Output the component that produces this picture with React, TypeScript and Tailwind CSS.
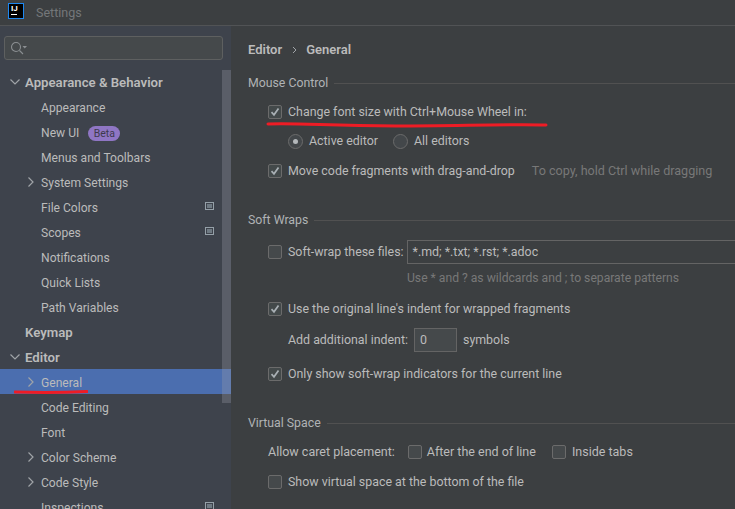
const font = { fontFamily: 'Roboto, "Noto Sans", sans-serif' };

type NavItem = {
  label: string;
  indent: number;
  bold?: boolean;
  chevron?: "right" | "down";
  selected?: boolean;
  badge?: boolean;
  page?: boolean;
};

const navItems: NavItem[] = [
  { label: "Appearance & Behavior", indent: 25, bold: true, chevron: "down" },
  { label: "Appearance", indent: 41 },
  { label: "New UI", indent: 41, badge: true },
  { label: "Menus and Toolbars", indent: 41 },
  { label: "System Settings", indent: 41, chevron: "right" },
  { label: "File Colors", indent: 41, page: true },
  { label: "Scopes", indent: 41, page: true },
  { label: "Notifications", indent: 41 },
  { label: "Quick Lists", indent: 41 },
  { label: "Path Variables", indent: 41 },
  { label: "Keymap", indent: 25, bold: true },
  { label: "Editor", indent: 25, bold: true, chevron: "down" },
  { label: "General", indent: 41, chevron: "right", selected: true },
  { label: "Code Editing", indent: 41 },
  { label: "Font", indent: 41 },
  { label: "Color Scheme", indent: 41, chevron: "right" },
  { label: "Code Style", indent: 41, chevron: "right" },
  { label: "Inspections", indent: 41, page: true },
];

function Chevron({ dir, left }: { dir: "right" | "down"; left: number }) {
  return (
    <svg
      className="absolute top-[7px]"
      style={{ left }}
      width="12"
      height="12"
      viewBox="0 0 12 12"
      fill="none"
      stroke="#a0a4a8"
      strokeWidth="1.2"
    >
      <path d={dir === "down" ? "M1.5 3.5 L6 8 L10.5 3.5" : "M3.5 1.5 L8 6 L3.5 10.5"} />
    </svg>
  );
}

function NavRow({ item }: { item: NavItem }) {
  return (
    <div
      className={`relative flex h-[25px] shrink-0 items-center ${
        item.selected ? "bg-[#4b6eaf]" : ""
      } ${item.bold ? "pt-[2px] text-[13.2px] font-semibold" : "pt-[4px] text-[12.1px]"} text-[#bbbbbb]`}
      style={{ paddingLeft: item.indent }}
    >
      {item.chevron && (
        <Chevron dir={item.chevron} left={item.indent === 25 ? 9 : 25} />
      )}
      <span>{item.label}</span>
      {item.badge && (
        <span className="ml-[9px] flex h-[15px] w-[32px] items-center justify-center rounded-full bg-[#8f76c4] text-[10.5px] text-[#3e3a4c]">
          Beta
        </span>
      )}
      {item.page && (
        <svg className="absolute left-[205px] top-[8px]" width="9" height="8" viewBox="0 0 9 8">
          <rect x="0" y="0" width="9" height="8" fill="#95a0a8" />
          <rect x="1" y="1" width="7" height="6" fill="#3e434c" />
          <rect x="2" y="2" width="5" height="4" fill="#6f7a83" />
        </svg>
      )}
    </div>
  );
}

function Checkbox({ checked }: { checked?: boolean }) {
  return (
    <span
      className={`flex h-[14px] w-[14px] shrink-0 items-center justify-center rounded-[2px] border border-[#6b6b6b] ${
        checked ? "bg-[#43494a]" : "bg-[#45494b]"
      }`}
    >
      {checked && (
        <svg width="10" height="10" viewBox="0 0 10 10" fill="none" stroke="#a9b0b5" strokeWidth="1.7">
          <path d="M1.5 5.2 L4 7.8 L8.5 1.5" />
        </svg>
      )}
    </span>
  );
}

function Radio({ checked }: { checked?: boolean }) {
  return (
    <span className="flex h-[15px] w-[15px] shrink-0 items-center justify-center rounded-full border border-[#6b6b6b] bg-[#43474a]">
      {checked && <span className="h-[5px] w-[5px] rounded-full bg-[#b4b8bb]" />}
    </span>
  );
}

function Section({ title }: { title: string }) {
  return (
    <div className="flex h-[20px] items-center gap-[6px] pl-[17px] text-[12.3px] text-[#b0b3b5]">
      <span>{title}</span>
      <div className="h-px grow bg-[#515151]" />
    </div>
  );
}

function CheckRow({ label, checked, hint }: { label: string; checked?: boolean; hint?: string }) {
  return (
    <div className="flex h-[20px] items-center pl-[37px] text-[12.4px] text-[#bbbbbb]">
      <Checkbox checked={checked} />
      <span className="ml-[6px] whitespace-nowrap">{label}</span>
      {hint && <span className="ml-[17px] whitespace-nowrap text-[12.6px] text-[#787878]">{hint}</span>}
    </div>
  );
}

export default function App() {
  return (
    <div className="flex h-[509px] w-[735px] flex-col overflow-hidden bg-[#3c3f41]" style={font}>
      {/* title bar */}
      <div className="flex h-[26px] shrink-0 items-start border-b border-[#515355] bg-[#3c3f41] pl-[8px]">
        <div className="mt-[3px] flex h-[16px] w-[16px] flex-col items-start border border-[#1e88f0] bg-black pl-[2px] pt-[1px]">
          <span className="text-[8px] font-bold leading-[8px] text-white">IJ</span>
          <span className="mt-[1px] h-px w-[6px] bg-white" />
        </div>
        <span className="ml-[12px] mt-[4px] text-[12.5px] leading-[18px] text-[#74777a]">Settings</span>
      </div>

      <div className="flex min-h-0 grow">
        {/* sidebar */}
        <div className="relative flex w-[231px] shrink-0 flex-col overflow-hidden bg-[#3e434c]">
          <div className="mx-[4px] mt-[10px] flex h-[24px] w-[219px] shrink-0 items-center rounded-[3px] border border-[#5e6060] bg-[#45494b] pl-[5px]">
            <svg width="18" height="14" viewBox="0 0 18 14" fill="none" stroke="#8b8f92" strokeWidth="1.1">
              <circle cx="6" cy="6" r="4.5" />
              <path d="M9.5 9.5 L13 13" />
              <path d="M12.5 5 L17 5 L14.75 7.5 Z" fill="#8b8f92" stroke="none" />
            </svg>
          </div>
          <div className="mt-[9px] flex flex-col">
            {navItems.map((item) => (
              <NavRow key={item.label} item={item} />
            ))}
          </div>
          {/* scrollbar */}
          <div className="absolute left-[222px] top-[44px] h-[333px] w-[9px] bg-[#9aa0a8]/30" />
          {/* red underline */}
          <svg className="absolute left-[14px] top-[363px]" width="74" height="6" viewBox="0 0 74 6" fill="none">
            <path d="M1 3 C20 3.5 50 3.5 73 2.5" stroke="#ee1c25" strokeWidth="3" strokeLinecap="round" />
          </svg>
        </div>

        {/* content */}
        <div className="relative flex min-w-0 grow flex-col overflow-hidden">
          <div className="mt-[14px] flex h-[20px] items-center pl-[17px] text-[13px] font-semibold text-[#bbbbbb]">
            <span>Editor</span>
            <svg className="ml-[9px] mr-[8px]" width="7" height="8" viewBox="0 0 7 8" fill="none" stroke="#a0a4a8">
              <path d="M2 1 L5 4 L2 7" />
            </svg>
            <span>General</span>
          </div>

          <div className="mt-[13px]">
            <Section title="Mouse Control" />
          </div>
          <div className="mt-[9px]">
            <CheckRow checked label="Change font size with Ctrl+Mouse Wheel in:" />
          </div>
          <div className="mt-[9px] flex h-[20px] items-center pl-[57px] text-[12.4px] text-[#bbbbbb]">
            <Radio checked />
            <span className="ml-[6px]">Active editor</span>
            <span className="ml-[15px]">
              <Radio />
            </span>
            <span className="ml-[6px]">All editors</span>
          </div>
          <div className="mt-[10px]">
            <CheckRow
              checked
              label="Move code fragments with drag-and-drop"
              hint="To copy, hold Ctrl while dragging"
            />
          </div>

          <div className="mt-[29px]">
            <Section title="Soft Wraps" />
          </div>
          <div className="mt-[10px] flex h-[24px] items-center pl-[37px] text-[12.4px] text-[#bbbbbb]">
            <Checkbox />
            <span className="ml-[6px] whitespace-nowrap">Soft-wrap these files:</span>
            <div className="ml-[3px] flex h-[24px] w-[340px] shrink-0 items-center border border-[#646464] bg-[#3c3f41] pl-[5px] text-[#bbbbbb]">
              *.md; *.txt; *.rst; *.adoc
            </div>
          </div>
          <div className="mt-[4px] flex h-[20px] items-center pl-[176px] text-[12.15px] whitespace-nowrap text-[#787878]">
            Use * and ? as wildcards and ; to separate patterns
          </div>
          <div className="mt-[11px]">
            <CheckRow checked label="Use the original line's indent for wrapped fragments" />
          </div>
          <div className="mt-[9px] flex h-[24px] items-center pl-[57px] text-[12.4px] text-[#bbbbbb]">
            <span>Add additional indent:</span>
            <div className="ml-[6px] flex h-[24px] w-[43px] items-center border border-[#646464] bg-[#45494b] pl-[5px]">
              0
            </div>
            <span className="ml-[6px]">symbols</span>
          </div>
          <div className="mt-[12px]">
            <CheckRow checked label="Only show soft-wrap indicators for the current line" />
          </div>

          <div className="mt-[29px]">
            <Section title="Virtual Space" />
          </div>
          <div className="mt-[9px] flex h-[20px] items-center pl-[37px] text-[12.5px] text-[#bbbbbb]">
            <span>Allow caret placement:</span>
            <span className="ml-[13px]">
              <Checkbox />
            </span>
            <span className="ml-[5px]">After the end of line</span>
            <span className="ml-[16px]">
              <Checkbox />
            </span>
            <span className="ml-[6px]">Inside tabs</span>
          </div>
          <div className="mt-[10px]">
            <CheckRow label="Show virtual space at the bottom of the file" />
          </div>

          {/* red underline */}
          <svg className="absolute left-[35px] top-[95px]" width="282" height="8" viewBox="0 0 282 8" fill="none">
            <path d="M2 3 C40 2 60 5 130 5 C190 5 240 3 280 4" stroke="#ee1c25" strokeWidth="3" strokeLinecap="round" />
          </svg>
        </div>
      </div>
    </div>
  );
}
